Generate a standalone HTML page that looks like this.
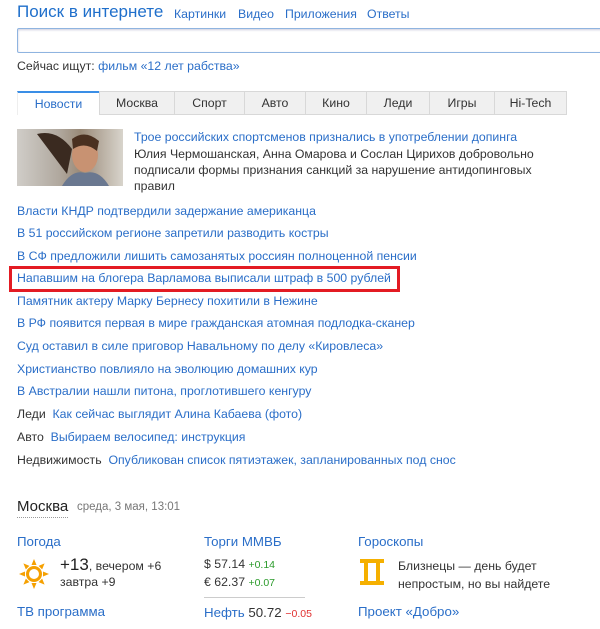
<!DOCTYPE html>
<html><head><meta charset="utf-8"><style>
*{margin:0;padding:0;box-sizing:border-box}
body{width:600px;height:629px;background:#fff;font-family:"Liberation Sans",Arial,sans-serif;font-size:12.3px;color:#333;position:relative;overflow:hidden}
.a{position:absolute;white-space:nowrap}
.l{color:#2a6ec8}
.t{position:absolute;top:91px;height:24px;background:#f0f0f0;border:1px solid #d8d8d8;border-left:none;text-align:center;line-height:22px;color:#333}
.b{font-size:13.3px}
</style></head><body>
<div class="a" style="left:17px;top:2px;font-size:17px;color:#1f6fcb">Поиск в интернете</div>
<div class="a l" style="left:174px;top:7px">Картинки</div>
<div class="a l" style="left:238px;top:7px">Видео</div>
<div class="a l" style="left:285px;top:7px">Приложения</div>
<div class="a l" style="left:367px;top:7px">Ответы</div>
<div class="a" style="left:17px;top:28px;width:600px;height:25px;border:1px solid #8fb4e0;border-radius:2px;box-shadow:inset 0 1px 2px #ccd"></div>
<div class="a" style="left:17px;top:59px">Сейчас ищут: <span class="l">фильм «12 лет рабства»</span></div>
<div class="a" style="left:17px;top:91px;width:82px;height:24px;border-top:2px solid #3a8ee6;text-align:center;line-height:22px;color:#2a6ec8;border-left:1px solid #eee">Новости</div>
<div class="t" style="left:99px;width:76px;border-left:1px solid #d8d8d8">Москва</div>
<div class="t" style="left:175px;width:70px">Спорт</div>
<div class="t" style="left:245px;width:61px">Авто</div>
<div class="t" style="left:306px;width:61px">Кино</div>
<div class="t" style="left:367px;width:63px">Леди</div>
<div class="t" style="left:430px;width:65px">Игры</div>
<div class="t" style="left:495px;width:72px">Hi-Tech</div>
<div class="a" style="left:17px;top:129px;width:106px;height:57px;background:linear-gradient(90deg,#d0cdc8 0%,#b0a89e 40%,#9a8a78 60%,#d8d4cc 100%);overflow:hidden">
<svg width="106" height="57"><path d="M20 5 Q40 0 55 20 L50 45 Z" fill="#3a2a20"/><ellipse cx="68" cy="26" rx="13" ry="17" fill="#c89272"/><path d="M55 10 Q68 0 82 12 L80 22 Q68 12 56 20Z" fill="#4a3020"/><path d="M45 57 Q55 40 68 44 Q82 40 92 57Z" fill="#6a7890"/></svg></div>
<div class="a l" style="left:134px;top:130px">Трое российских спортсменов признались в употреблении допинга</div>
<div class="a" style="left:134px;top:146px;line-height:16px;white-space:normal;width:400px">Юлия Чермошанская, Анна Омарова и Сослан Цирихов добровольно подписали формы признания санкций за нарушение антидопинговых правил</div>
<div class="a l" style="left:17px;top:204px">Власти КНДР подтвердили задержание американца</div>
<div class="a l" style="left:17px;top:226px">В 51 российском регионе запретили разводить костры</div>
<div class="a l" style="left:17px;top:249px">В СФ предложили лишить самозанятых россиян полноценной пенсии</div>
<div class="a" style="left:9px;top:266px;width:391px;height:26px;border:3px solid #e31b23"></div>
<div class="a l" style="left:17px;top:271px">Напавшим на блогера Варламова выписали штраф в 500 рублей</div>
<div class="a l" style="left:17px;top:294px">Памятник актеру Марку Бернесу похитили в Нежине</div>
<div class="a l" style="left:17px;top:316px">В РФ появится первая в мире гражданская атомная подлодка-сканер</div>
<div class="a l" style="left:17px;top:339px">Суд оставил в силе приговор Навальному по делу «Кировлеса»</div>
<div class="a l" style="left:17px;top:362px">Христианство повлияло на эволюцию домашних кур</div>
<div class="a l" style="left:17px;top:384px">В Австралии нашли питона, проглотившего кенгуру</div>
<div class="a" style="left:17px;top:407px">Леди&nbsp;&nbsp;<span class="l">Как сейчас выглядит Алина Кабаева (фото)</span></div>
<div class="a" style="left:17px;top:430px">Авто&nbsp;&nbsp;<span class="l">Выбираем велосипед: инструкция</span></div>
<div class="a" style="left:17px;top:453px">Недвижимость&nbsp;&nbsp;<span class="l">Опубликован список пятиэтажек, запланированных под снос</span></div>
<div class="a" style="left:17px;top:497px;font-size:15px;color:#222;border-bottom:1px dotted #999;line-height:20px">Москва</div>
<div class="a" style="left:77px;top:501px;font-size:11.5px;color:#777">среда, 3 мая, 13:01</div>
<div class="a l b" style="left:17px;top:534px">Погода</div>
<svg class="a" style="left:18px;top:558px" width="32" height="32" viewBox="-16 -16 32 32"><g fill="#f5a000"><circle r="8"/><g id="r"><path d="M-2.5 -9 L0 -15 L2.5 -9Z"/></g><use href="#r" transform="rotate(45)"/><use href="#r" transform="rotate(90)"/><use href="#r" transform="rotate(135)"/><use href="#r" transform="rotate(180)"/><use href="#r" transform="rotate(225)"/><use href="#r" transform="rotate(270)"/><use href="#r" transform="rotate(315)"/></g><circle r="5" fill="#fff"/></svg>
<div class="a" style="left:60px;top:555px;font-size:17px;color:#222">+13<span style="font-size:12.3px;color:#333">, вечером +6</span></div>
<div class="a" style="left:60px;top:575px">завтра +9</div>
<div class="a l b" style="left:17px;top:604px">ТВ программа</div>
<div class="a l b" style="left:204px;top:534px">Торги ММВБ</div>
<div class="a" style="left:204px;top:557px">$ 57.14 <span style="color:#2a9a2a;font-size:10.5px">+0.14</span></div>
<div class="a" style="left:204px;top:575px">€ 62.37 <span style="color:#2a9a2a;font-size:10.5px">+0.07</span></div>
<div class="a" style="left:204px;top:597px;width:101px;border-top:1px solid #ccc"></div>
<div class="a b" style="left:204px;top:605px"><span class="l">Нефть</span> 50.72 <span style="color:#e03030;font-size:10.5px">−0.05</span></div>
<div class="a l b" style="left:358px;top:534px">Гороскопы</div>
<svg class="a" style="left:360px;top:559px" width="24" height="26"><g fill="#f5b000"><rect x="0" y="0" width="24" height="4"/><rect x="0" y="22" width="24" height="4"/><rect x="4" y="3" width="4" height="20"/><rect x="16" y="3" width="4" height="20"/></g></svg>
<div class="a" style="left:398px;top:557px;line-height:18px">Близнецы — день будет<br>непростым, но вы найдете</div>
<div class="a l b" style="left:358px;top:604px">Проект «Добро»</div>
</body></html>
